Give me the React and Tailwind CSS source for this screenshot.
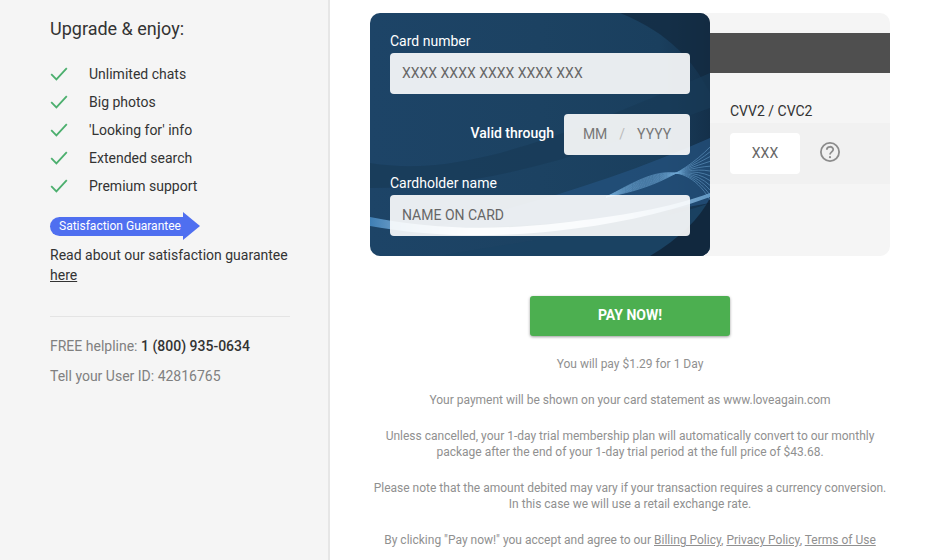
const perks = ["Unlimited chats", "Big photos", "'Looking for' info", "Extended search", "Premium support"];

const Check = () => (
  <svg width="18" height="14" viewBox="0 0 18 14" fill="none" className="shrink-0">
    <path d="M1.2 7.2 L6.4 12.4 L16.8 1.2" stroke="#4caf6e" strokeWidth="1.8" />
  </svg>
);

// Decorative waves printed on the front of the card
const CardArt = () => (
  <svg viewBox="0 0 340 243" className="absolute inset-0 w-full h-full" preserveAspectRatio="none">
    <defs>
      <linearGradient id="base" x1="0" y1="0" x2="1" y2="0">
        <stop offset="0" stopColor="#1d4467" />
        <stop offset="0.5" stopColor="#1c4262" />
        <stop offset="0.85" stopColor="#1a3f5e" />
        <stop offset="1" stopColor="#14304a" />
      </linearGradient>
      <linearGradient id="glow" x1="0" y1="0" x2="1" y2="0">
        <stop offset="0" stopColor="#3f7fb5" />
        <stop offset="0.3" stopColor="#dfeaf4" />
        <stop offset="0.7" stopColor="#c4d8e8" />
        <stop offset="1" stopColor="#5f96c2" />
      </linearGradient>
    </defs>
    <rect width="340" height="243" fill="url(#base)" />
    <path d="M250 0 C300 20 325 50 340 80 L340 0 Z" fill="#13293f" opacity="0.7" />
    <path d="M0 150 C90 165 190 125 340 60 L340 95 C230 135 130 175 0 175 Z" fill="#183a57" opacity="0.7" />
    <path d="M60 215 C150 195 250 165 340 125 L340 190 C260 205 150 215 60 215 Z" fill="#24527d" opacity="0.75" />
    <path d="M70 243 C170 225 270 215 340 190 L340 243 Z" fill="#1b4263" opacity="0.9" />
    <path d="M280 243 C310 225 330 205 340 185 L340 243 Z" fill="#0f2236" opacity="0.8" />
    <path d="M0 204 C60 216 120 218 190 210 C250 203 300 195 340 180 L340 184 C290 202 240 212 185 218 C110 226 50 222 0 213 Z" fill="url(#glow)" />
    {[0, 1, 2, 3, 4, 5, 6, 7, 8, 9, 10, 11].map((i) => (
      <path
        key={i}
        d={`M236 184 C270 ${178 - i} 310 ${165 - i * 2.5} 340 ${134 + i * 4.8}`}
        fill="none"
        stroke="#6fa6d2"
        strokeWidth="0.7"
        opacity="0.75"
      />
    ))}
  </svg>
);

export default function App() {
  return (
    <div className="flex h-[560px] overflow-hidden bg-white text-[#333] font-['Roboto',sans-serif]">
      {/* Sidebar */}
      <aside className="w-[330px] shrink-0 bg-[#f5f5f5] border-r-2 border-[#e6e6e6] pl-[50px] pr-[38px] pt-[17px]">
        <h2 className="text-[18px] leading-[24px] font-normal text-[#333]">Upgrade &amp; enjoy:</h2>
        <ul className="mt-[19px]">
          {perks.map((p) => (
            <li key={p} className="flex items-center h-[28px] text-[14px] text-[#333]">
              <Check />
              <span className="ml-[21px]">{p}</span>
            </li>
          ))}
        </ul>
        <div className="flex items-center mt-[12px] h-[28px]">
          <div className="h-[19px] w-[133px] bg-[#4f6ff0] rounded-l-full text-white text-[12px] leading-[19px] pl-[9px] whitespace-nowrap">
            Satisfaction Guarantee
          </div>
          <div className="w-0 h-0 border-y-[14px] border-y-transparent border-l-[17px] border-l-[#4f6ff0]" />
        </div>
        <p className="mt-[5px] text-[14px] leading-[20px] text-[#333]">
          Read about our satisfaction guarantee <a className="underline">here</a>
        </p>
        <div className="mt-[31px] border-t border-[#e4e4e4] pt-[19px] text-[14px] text-[#808080]">
          <p className="leading-[20px]">
            FREE helpline: <b className="font-medium text-[#333]">1 (800) 935-0634</b>
          </p>
          <p className="mt-[10px] leading-[20px]">Tell your User ID: 42816765</p>
        </div>
      </aside>

      {/* Payment */}
      <main className="w-[520px] ml-[40px] pt-[13px]">
        <div className="flex h-[243px]">
          <div className="relative z-10 w-[340px] rounded-[10px] overflow-hidden px-[20px] pt-[18px] text-white text-[14px] font-medium">
            <CardArt />
            <div className="relative">
              <div className="leading-[20px] h-[22px] font-normal">Card number</div>
              <input
                placeholder="XXXX XXXX XXXX XXXX XXX"
                className="block w-full h-[41px] rounded-[4px] bg-white/90 px-[12px] pb-[2px] text-[14px] font-normal placeholder:text-[#666] outline-none"
              />
              <div className="flex items-center justify-end mt-[20px] h-[41px]">
                <span className="mr-[10px] pb-[2px]">Valid through</span>
                <div className="flex items-center justify-center w-[126px] h-[41px] rounded-[4px] bg-white/90 text-[14px] font-normal text-[#777]">
                  <span>MM</span>
                  <span className="mx-[12px] text-[#bbb]">/</span>
                  <span>YYYY</span>
                </div>
              </div>
              <div className="mt-[18px] leading-[20px] h-[22px] font-normal">Cardholder name</div>
              <input
                placeholder="NAME ON CARD"
                className="block w-full h-[41px] rounded-[4px] bg-white/90 px-[12px] pb-[2px] text-[14px] font-normal placeholder:text-[#666] outline-none"
              />
            </div>
          </div>

          <div className="-ml-[12px] flex-1 bg-[#f5f5f5] rounded-r-[10px] pt-[20px]">
            <div className="h-[40px] bg-[#4f4f4f]" />
            <div className="pl-[32px] mt-[28px] text-[14px] leading-[20px] text-[#333]">CVV2 / CVC2</div>
            <div className="mt-[2px] h-[61px] bg-[#f1f1f1] pl-[32px] flex items-center">
              <div className="w-[70px] h-[41px] bg-white rounded-[4px] flex items-center justify-center text-[14px] text-[#666]">
                XXX
              </div>
              <svg width="20" height="20" viewBox="0 0 20 20" fill="none" className="ml-[20px] -mt-[3px]">
                <circle cx="10" cy="10" r="9.1" stroke="#8c8c8c" strokeWidth="1.8" />
                <path d="M6.8 7.8 C6.8 3.8 13.2 3.8 13.2 7.6 C13.2 10 10 9.8 10 12.6" stroke="#8c8c8c" strokeWidth="1.8" />
                <circle cx="10" cy="15.2" r="1.1" fill="#8c8c8c" />
              </svg>
            </div>
          </div>
        </div>

        <button className="block mx-auto mt-[40px] w-[200px] h-[40px] rounded-[3px] bg-[#4caf50] text-white text-[14px] font-bold pb-[2px] shadow-[0_1px_3px_rgba(0,0,0,0.4)]">
          PAY NOW!
        </button>

        <div className="mt-[20px] text-center text-[12px] leading-[16px] text-[#909090]">
          <p>You will pay $1.29 for 1 Day</p>
          <p className="mt-[20px]">Your payment will be shown on your card statement as www.loveagain.com</p>
          <p className="mt-[20px]">
            Unless cancelled, your 1-day trial membership plan will automatically convert to our monthly
            <br />
            package after the end of your 1-day trial period at the full price of $43.68.
          </p>
          <p className="mt-[20px]">
            Please note that the amount debited may vary if your transaction requires a currency conversion.
            <br />
            In this case we will use a retail exchange rate.
          </p>
          <p className="mt-[20px]">
            By clicking "Pay now!" you accept and agree to our <a className="underline">Billing Policy</a>,{" "}
            <a className="underline">Privacy Policy</a>, <a className="underline">Terms of Use</a>
          </p>
        </div>
      </main>
    </div>
  );
}
